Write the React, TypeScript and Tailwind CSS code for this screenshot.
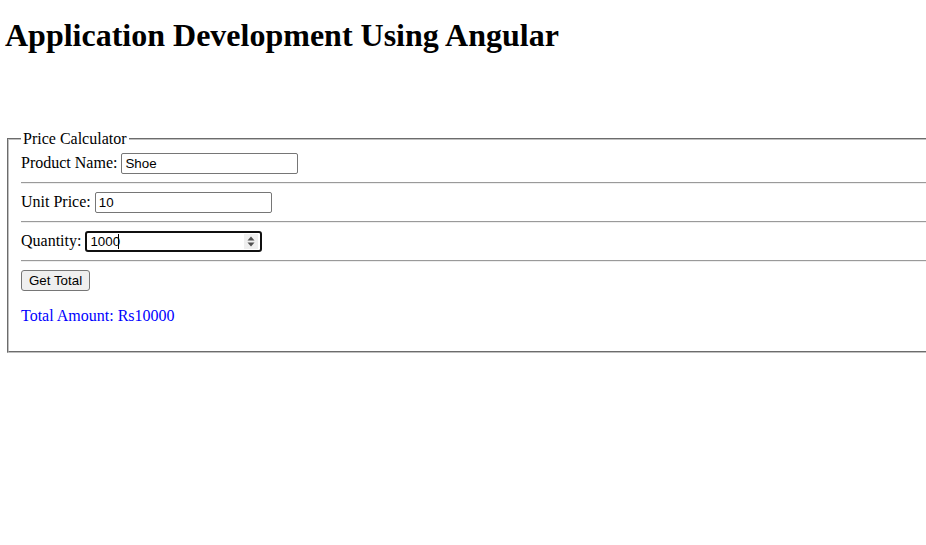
import React, { useState } from "react";

// Simple price calculator form, styled like the browser's default form controls
export default function App() {
  const [name, setName] = useState("Shoe");
  const [price, setPrice] = useState("10");
  const [qty, setQty] = useState("1000");
  const [total, setTotal] = useState(10000);

  const serif = "font-['Liberation_Serif','Times_New_Roman',serif]";
  const control =
    "font-['Liberation_Sans',Arial,sans-serif] text-[13.33px] text-black bg-white h-[21px] w-[177px] px-[3px] border border-[#767676] rounded-[2px] outline-none";

  return (
    <div className={`h-[545px] w-[926px] overflow-hidden bg-white text-black pt-[17px] pl-[5px] ${serif}`}>
      <h1 className="text-[32px] font-bold leading-[37px]">Application Development Using Angular</h1>

      <fieldset className="mt-[76px] ml-[2px] w-[960px] border-2 [border-style:groove] border-[#c0c0c0] px-[12px] pt-[5px] pb-[10px] text-[16px] leading-[18px]">
        <legend className="px-[2px]">Price Calculator</legend>

        {/* Product name row */}
        <div className="flex items-baseline gap-[4px]">
          <span>Product Name:</span>
          <input className={control} value={name} onChange={(e) => setName(e.target.value)} />
        </div>
        <hr className="my-[8px] border-t border-b border-t-[#9a9a9a] border-b-[#eeeeee]" />

        {/* Unit price row */}
        <div className="flex items-baseline gap-[4px]">
          <span>Unit Price:</span>
          <input className={control} value={price} onChange={(e) => setPrice(e.target.value)} />
        </div>
        <hr className="my-[8px] border-t border-b border-t-[#9a9a9a] border-b-[#eeeeee]" />

        {/* Quantity row, shown focused */}
        <div className="flex items-baseline gap-[4px]">
          <span>Quantity:</span>
          <div className="relative">
            <input
              className="font-['Liberation_Sans',Arial,sans-serif] text-[13.33px] text-black bg-white h-[21px] w-[177px] pl-[3px] pr-[20px] border-2 border-[#101010] rounded-[3px] outline-none"
              value={qty}
              onChange={(e) => setQty(e.target.value)}
            />
            <span className="absolute left-[33px] top-[3px] h-[15px] w-px bg-black" />
            <span className="absolute right-[4px] top-[3px] h-[15px] w-[14px] bg-[#efefef] flex items-center justify-center">
              <svg width="8" height="11" viewBox="0 0 8 11">
                <path d="M4 0.5 L7.5 4.5 H0.5 Z" fill="#505050" />
                <path d="M4 10.5 L7.5 6.5 H0.5 Z" fill="#505050" />
              </svg>
            </span>
          </div>
        </div>
        <hr className="my-[8px] border-t border-b border-t-[#9a9a9a] border-b-[#eeeeee]" />

        <button
          className="font-['Liberation_Sans',Arial,sans-serif] text-[13.33px] h-[21px] px-[7px] bg-[#efefef] border border-[#767676] rounded-[3px]"
          onClick={() => setTotal(Number(price) * Number(qty))}
        >
          Get Total
        </button>

        <p className="my-[16px] text-[#0000ff]">Total Amount: Rs{total}</p>
      </fieldset>
    </div>
  );
}
